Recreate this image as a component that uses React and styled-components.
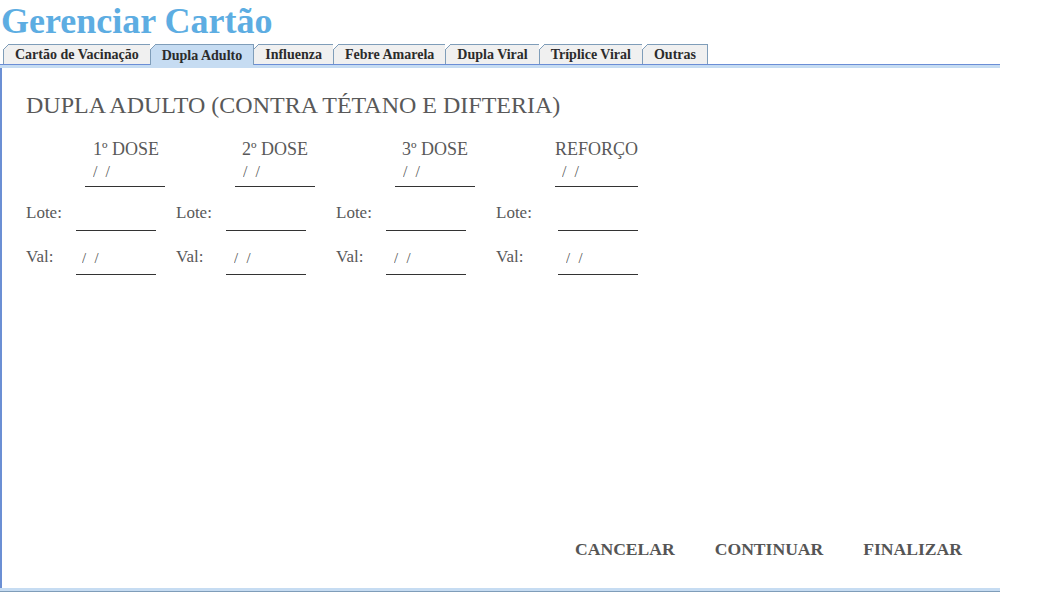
import React from "react";
import styled, { createGlobalStyle } from "styled-components";

const GlobalStyle = createGlobalStyle`
  body {
    margin: 0;
    background: #fff;
    font-family: "Liberation Serif", "Times New Roman", serif;
  }
`;

const Page = styled.div`
  width: 1000px;
`;

const Title = styled.h1`
  margin: 0;
  height: 44px;
  padding-left: 1px;
  font-size: 36px;
  line-height: 42px;
  font-weight: bold;
  color: #5dade2;
`;

const TabBar = styled.div`
  display: flex;
  height: 20px;
  padding-left: 4px;
  position: relative;
  z-index: 1;
`;

const Tab = styled.button`
  position: relative;
  height: ${(p) => (p.$active ? "21px" : "20px")};
  margin-left: -1px;
  padding: 0 11px;
  border: 1px solid #7f9db9;
  border-bottom: none;
  background: ${(p) => (p.$active ? "#c6dcf2" : "#f0f0f0")};
  font-family: "Liberation Serif", "Times New Roman", serif;
  font-size: 14px;
  line-height: 19px;
  font-weight: bold;
  color: #2b2b2b;
  cursor: pointer;
  z-index: ${(p) => (p.$active ? 2 : 1)};

  &::before {
    content: "";
    position: absolute;
    top: -1px;
    left: -1px;
    width: 6px;
    height: 6px;
    background: linear-gradient(135deg, #fff 0 42%, #7f9db9 42% 58%, transparent 58%);
  }
`;

const Panel = styled.div`
  border-top: 1px solid #6b8ed6;
  border-bottom: 1px solid #7f9db9;
`;

const Strip = styled.div`
  height: 3px;
  background: #c6dcf2;
`;

const Body = styled.div`
  box-sizing: border-box;
  height: 520px;
  display: flex;
  flex-direction: column;
  padding: 23px 38px 28px 24px;
  border-left: 2px solid #6b8fd4;
  color: #595959;
`;

const Heading = styled.h2`
  margin: 0 0 20px;
  font-size: 24px;
  line-height: 28px;
  font-weight: normal;
  color: #595959;
`;

const Grid = styled.div`
  display: grid;
  grid-template-columns: 150px 160px 160px 142px;
  row-gap: 22px;
`;

const DoseCell = styled.div`
  display: flex;
  flex-direction: column;
  padding-left: 59px;
`;

const DoseLabel = styled.div`
  padding-left: ${(p) => p.$inset}px;
  font-size: 18px;
  line-height: 21px;
  margin-bottom: 5px;
`;

const FieldCell = styled.div`
  height: 22px;
  display: flex;
  align-items: flex-end;
`;

const Label = styled.label`
  width: ${(p) => p.$width}px;
  margin-bottom: 11px;
  font-size: 17px;
  line-height: 14px;
`;

const Blank = styled.input`
  box-sizing: border-box;
  width: ${(p) => p.$width || 80}px;
  height: 22px;
  padding: 0 0 ${(p) => p.$bottom || 8}px ${(p) => (p.$pad === undefined ? 8 : p.$pad)}px;
  border: none;
  border-bottom: 1px solid #333;
  background: transparent;
  outline: none;
  font-family: "Liberation Serif", "Times New Roman", serif;
  font-size: 16px;
  color: #595959;
`;

const Actions = styled.div`
  margin-top: auto;
  display: flex;
  justify-content: flex-end;
  gap: 40px;
`;

const ActionButton = styled.button`
  padding: 0;
  border: none;
  background: none;
  font-family: "Liberation Serif", "Times New Roman", serif;
  font-size: 17.6px;
  line-height: 21px;
  font-weight: bold;
  color: #555;
  cursor: pointer;
`;

const tabs = [
  "Cartão de Vacinação",
  "Dupla Adulto",
  "Influenza",
  "Febre Amarela",
  "Dupla Viral",
  "Tríplice Viral",
  "Outras",
];

const doses = [
  { name: "1º DOSE", inset: 8, width: 80, lote: 50, valPad: 6 },
  { name: "2º DOSE", inset: 7, width: 80, lote: 50, valPad: 8 },
  { name: "3º DOSE", inset: 7, width: 80, lote: 50, valPad: 8 },
  { name: "REFORÇO", inset: 0, width: 83, lote: 62, valPad: 8 },
];

const DATE = "/  /";

export default function App() {
  return (
    <Page>
      <GlobalStyle />
      <Title>Gerenciar Cartão</Title>
      <TabBar>
        {tabs.map((t) => (
          <Tab key={t} $active={t === "Dupla Adulto"}>
            {t}
          </Tab>
        ))}
      </TabBar>
      <Panel>
        <Strip />
        <Body>
          <Heading>DUPLA ADULTO (CONTRA TÉTANO E DIFTERIA)</Heading>
          <Grid>
            {doses.map((d) => (
              <DoseCell key={d.name}>
                <DoseLabel $inset={d.inset}>{d.name}</DoseLabel>
                <Blank $width={d.width} $pad={d.inset === 0 ? 7 : 8} defaultValue={DATE} />
              </DoseCell>
            ))}
            {doses.map((d) => (
              <FieldCell key={"lote" + d.name}>
                <Label $width={d.lote}>Lote:</Label>
                <Blank />
              </FieldCell>
            ))}
            {doses.map((d) => (
              <FieldCell key={"val" + d.name}>
                <Label $width={d.lote}>Val:</Label>
                <Blank $pad={d.valPad} $bottom={12} defaultValue={DATE} />
              </FieldCell>
            ))}
          </Grid>
          <Actions>
            <ActionButton>CANCELAR</ActionButton>
            <ActionButton>CONTINUAR</ActionButton>
            <ActionButton>FINALIZAR</ActionButton>
          </Actions>
        </Body>
        <Strip />
      </Panel>
    </Page>
  );
}
